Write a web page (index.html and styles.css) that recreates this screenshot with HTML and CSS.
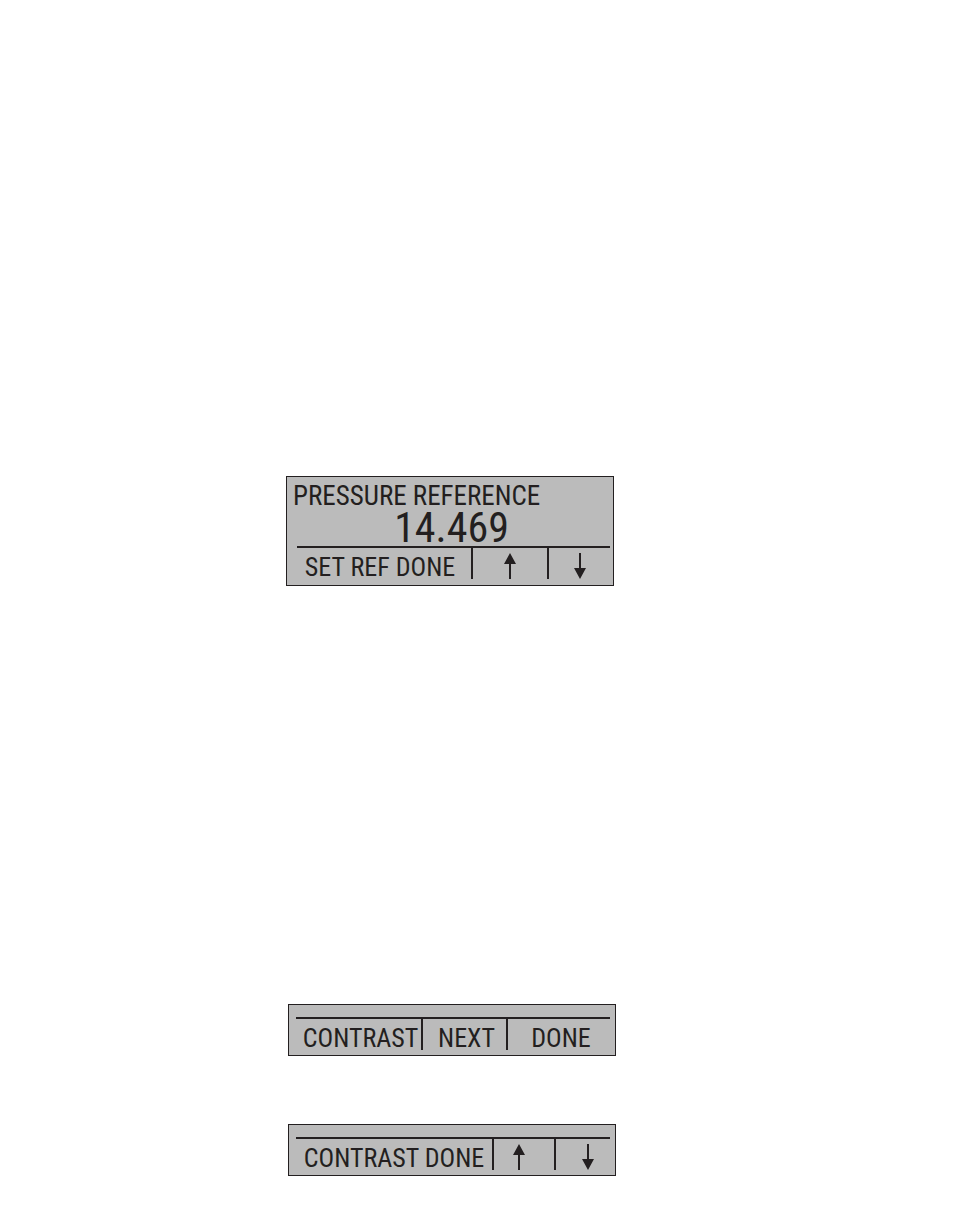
FILE: index.html
```
<!DOCTYPE html>
<html lang="en">
<head>
  <meta charset="utf-8">
  <title>Pressure Reference</title>
  <link rel="stylesheet" href="styles.css">
</head>
<body>
  <main>
    <!-- Pressure reference -->
    <section class="row row-reference">
      <div class="screen">
        <h1 class="screen-title">PRESSURE REFERENCE</h1>
        <output class="reading">14.469</output>
        <div class="softkeys keys-reference">
          <button type="button" class="wide-key">SET REF DONE</button>
          <button type="button" class="arrow-key" aria-label="Up">
            <svg class="arrow" viewBox="0 0 12 26"><path d="M6 0L12 11H7V26H5V11H0Z"/></svg>
          </button>
          <button type="button" class="arrow-key" aria-label="Down">
            <svg class="arrow" viewBox="0 0 12 26"><path d="M5 0H7V15H12L6 26L0 15H5Z"/></svg>
          </button>
        </div>
      </div>
    </section>

    <!-- Contrast menu -->
    <section class="row row-menu">
      <div class="screen screen-menu">
        <div class="softkeys keys-menu">
          <button type="button">CONTRAST</button>
          <button type="button">NEXT</button>
          <button type="button">DONE</button>
        </div>
      </div>
    </section>

    <!-- Contrast adjustment -->
    <section class="row row-menu">
      <div class="screen screen-menu">
        <div class="softkeys keys-contrast">
          <button type="button">CONTRAST DONE</button>
          <button type="button" class="arrow-key key-up" aria-label="Up">
            <svg class="arrow" viewBox="0 0 12 26"><path d="M6 0L12 11H7V26H5V11H0Z"/></svg>
          </button>
          <button type="button" class="arrow-key key-down" aria-label="Down">
            <svg class="arrow" viewBox="0 0 12 26"><path d="M5 0H7V15H12L6 26L0 15H5Z"/></svg>
          </button>
        </div>
      </div>
    </section>
  </main>
</body>
</html>
```

FILE: styles.css
```
* {
  box-sizing: border-box;
}
body {
  margin: 0;
  background-color: #fff;
  color: #231f20;
  font-family: "Roboto Condensed", "Liberation Sans Narrow", "Arial Narrow", "Liberation Sans", sans-serif;
  font-size: 26px;
}
main {
  display: flex;
  flex-direction: column;
  gap: 68px;
  padding: 476px 0 51px;
}
.row {
  display: grid;
}
.row-reference {
  grid-template-columns: 286fr 328fr 340fr;
  margin-bottom: 350px;
}
.row-menu {
  grid-template-columns: 288fr 328fr 338fr;
}
.screen {
  grid-column: 2;
  min-width: 0;
  background-color: #bbb;
  border: 1px solid #231f20;
  padding: 5px 3px 6px 6px;
}
.screen-menu {
  padding: 12px 5px 5px 7px;
}
.screen-title {
  margin: 0;
  font-size: 27px;
  font-weight: normal;
  line-height: 28px;
  white-space: nowrap;
}
.reading {
  display: block;
  font-size: 42px;
  line-height: 36px;
  text-align: center;
}
.softkeys {
  display: grid;
  border-top: 2px solid #231f20;
}
.keys-reference {
  grid-template-columns: 176fr 76fr 61fr;
  margin-left: 4px;
}
.keys-menu {
  grid-template-columns: 127fr 85fr 102fr;
}
.keys-contrast {
  grid-template-columns: 198fr 62fr 54fr;
}
.softkeys button {
  display: flex;
  align-items: center;
  justify-content: center;
  min-width: 0;
  height: 31px;
  padding: 7px 0 0;
  border: none;
  border-right: 2px solid #231f20;
  border-radius: 0;
  background: none;
  color: inherit;
  font: inherit;
  line-height: 24px;
  white-space: nowrap;
  cursor: pointer;
}
.softkeys button:last-child {
  border-right: none;
}
.keys-menu button {
  padding-left: 4px;
}
.softkeys .wide-key {
  padding-right: 8px;
}
.softkeys .arrow-key {
  padding-top: 5px;
}
.softkeys .key-up {
  padding-right: 10px;
}
.softkeys .key-down {
  padding-left: 10px;
}
.arrow {
  width: 12px;
  height: 26px;
  fill: #231f20;
}
```
